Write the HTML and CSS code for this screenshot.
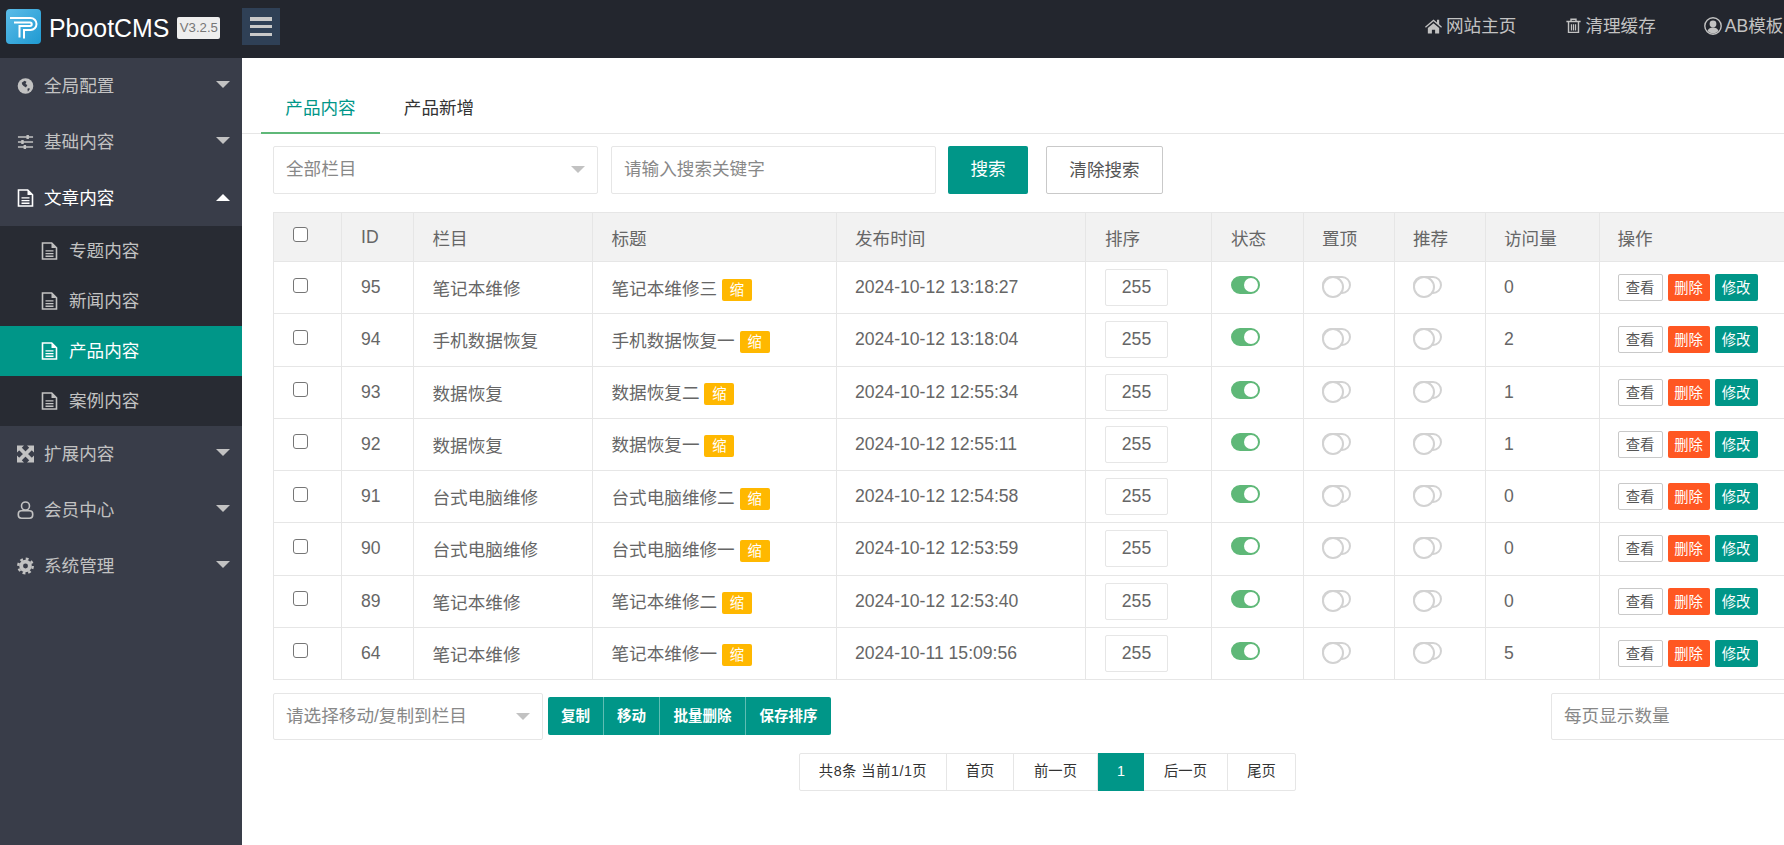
FILE: index.html
```html
<!DOCTYPE html>
<html lang="zh-CN">
<head>
<meta charset="utf-8">
<title>PbootCMS</title>
<link rel="stylesheet" href="styles.css">
</head>
<body>
<svg class="defs" width="0" height="0" aria-hidden="true">
  <symbol id="i-doc" viewBox="0 0 16 18"><path fill="none" stroke="currentColor" stroke-width="1.6" d="M1 1h9.2L15 5.8V17H1z"/><path fill="currentColor" d="M10 1l5 5h-5zM4 8.2h8v1.4H4zM4 10.9h8v1.4H4zM4 13.6h8V15H4z"/></symbol>
</svg>
<div class="app">
  <header class="top">
    <div class="brand">
      <svg class="logo" viewBox="0 0 35 35"><defs><linearGradient id="lg" x1="0" y1="0" x2="1" y2="1"><stop offset="0" stop-color="#5cbce8"/><stop offset="1" stop-color="#1f9ad2"/></linearGradient></defs><rect width="35" height="35" rx="4" fill="url(#lg)"/><path fill="none" stroke="#fff" stroke-width="2" d="M4 9h20.500a5.500 5.500 0 0 1 0 12H18v8.500M8 13.500h16a1.500 1.500 0 0 1 0 3.500H13.500v11.500"/></svg>
      <span class="brand-name">PbootCMS</span>
      <span class="version">V3.2.5</span>
    </div>
    <button class="menu-toggle" aria-label="菜单"><i></i><i></i><i></i></button>
    <nav class="top-nav">
      <a><svg class="ti" viewBox="0 0 18 16"><path fill="currentColor" d="M9 1L0 8.700l.9 1.100L9 3l8.100 6.800.9-1.100-3-2.500V1.500h-2.300v2.800zM3 10v6h4.300v-4h3.400v4H15v-6L9 5z"/></svg>网站主页</a>
      <a class="nav-trash"><svg class="ti" viewBox="0 0 16 18"><path fill="none" stroke="currentColor" stroke-width="1.600" d="M0 4h16M5.200 4V1.500h5.600V4M2.400 4v12.200h11.200V4"/><path fill="currentColor" d="M5 7h1.400v7H5zM7.300 7h1.400v7H7.300zM9.600 7H11v7H9.600z"/></svg>清理缓存</a>
      <a class="nav-user"><svg class="ti ti-user" viewBox="0 0 18 18"><circle cx="9" cy="9" r="8.200" fill="none" stroke="currentColor" stroke-width="1.400"/><circle cx="9" cy="7" r="3.400" fill="currentColor"/><path fill="currentColor" d="M3.500 14c1-3 3-3.500 5.500-3.500S13.500 11 14.500 14a7.500 7.500 0 0 1-11 0z"/></svg>AB模板</a>
    </nav>
  </header>
  <div class="body">
    <aside class="side">
      <a class="nav-item">
        <svg class="ni" viewBox="0 0 18 18"><circle cx="9" cy="9" r="8.300" fill="currentColor"/><path fill="#393d49" d="M5 5.500l3-2 2 1-1 2.300 2 1.200-1.500 2.500L7 9 5.500 7.500zM11 12l2-1 .5 1.500-2 2.500z"/></svg>
        <span>全局配置</span><b class="caret"></b>
      </a>
      <a class="nav-item">
        <svg class="ni" viewBox="0 0 18 16"><path fill="currentColor" d="M1 2h16v1.500H1zM1 7.200h16v1.500H1zM1 12.500h16V14H1zM10 .6h2.600v4.200H10zM4.500 5.900h2.600v4.200H4.500zM7 11.200h2.600v4.200H7z"/></svg>
        <span>基础内容</span><b class="caret"></b>
      </a>
      <a class="nav-item open">
        <svg class="ni"><use href="#i-doc"/></svg>
        <span>文章内容</span><b class="caret up"></b>
      </a>
      <div class="sub">
        <a class="sub-item"><svg class="ni"><use href="#i-doc"/></svg><span>专题内容</span></a>
        <a class="sub-item"><svg class="ni"><use href="#i-doc"/></svg><span>新闻内容</span></a>
        <a class="sub-item active"><svg class="ni"><use href="#i-doc"/></svg><span>产品内容</span></a>
        <a class="sub-item"><svg class="ni"><use href="#i-doc"/></svg><span>案例内容</span></a>
      </div>
      <a class="nav-item">
        <svg class="ni" viewBox="0 0 17 17"><path fill="currentColor" d="M0 0h7L0 7zM17 0v7l-7-7zM0 17v-7l7 7zM17 17h-7l7-7z"/><path fill="none" stroke="currentColor" stroke-width="3.800" d="M2.500 2.500l12 12M14.500 2.500l-12 12"/></svg>
        <span>扩展内容</span><b class="caret"></b>
      </a>
      <a class="nav-item">
        <svg class="ni" viewBox="0 0 16 18"><circle cx="8" cy="5" r="4" fill="none" stroke="currentColor" stroke-width="1.600"/><rect x=".8" y="9.800" width="14.400" height="7.400" rx="3.200" fill="none" stroke="currentColor" stroke-width="1.600"/></svg>
        <span>会员中心</span><b class="caret"></b>
      </a>
      <a class="nav-item">
        <svg class="ni" viewBox="0 0 18 18"><circle cx="9" cy="9" r="4.600" fill="none" stroke="currentColor" stroke-width="4"/><circle cx="9" cy="9" r="7.600" fill="none" stroke="currentColor" stroke-width="2.600" stroke-dasharray="3 2.970"/></svg>
        <span>系统管理</span><b class="caret"></b>
      </a>
    </aside>
    <main class="main">
      <div class="tabs">
        <a class="tab current">产品内容</a>
        <a class="tab second">产品新增</a>
      </div>
      <div class="search">
        <div class="select w-cat"><span>全部栏目</span><b class="arrow"></b></div>
        <div class="input w-key">请输入搜索关键字</div>
        <a class="btn btn-green">搜索</a>
        <a class="btn btn-plain">清除搜索</a>
      </div>
      <table class="grid">
        <colgroup>
          <col class="c1"><col class="c2"><col class="c3"><col class="c4"><col class="c5"><col class="c6"><col class="c7"><col class="c8"><col class="c9"><col class="c10"><col class="c11">
        </colgroup>
        <thead>
          <tr>
            <th><span class="check"></span></th><th>ID</th><th>栏目</th><th>标题</th><th>发布时间</th><th>排序</th><th>状态</th><th>置顶</th><th>推荐</th><th>访问量</th><th>操作</th>
          </tr>
        </thead>
        <tbody>
          <tr><td><span class="check"></span></td><td>95</td><td>笔记本维修</td><td>笔记本维修三 <span class="tag">缩</span></td><td>2024-10-12 13:18:27</td><td><span class="sort">255</span></td><td><span class="sw on"></span></td><td><span class="sw"></span></td><td><span class="sw"></span></td><td>0</td><td class="ops"><a class="op view">查看</a><a class="op del">删除</a><a class="op edit">修改</a></td></tr>
          <tr><td><span class="check"></span></td><td>94</td><td>手机数据恢复</td><td>手机数据恢复一 <span class="tag">缩</span></td><td>2024-10-12 13:18:04</td><td><span class="sort">255</span></td><td><span class="sw on"></span></td><td><span class="sw"></span></td><td><span class="sw"></span></td><td>2</td><td class="ops"><a class="op view">查看</a><a class="op del">删除</a><a class="op edit">修改</a></td></tr>
          <tr><td><span class="check"></span></td><td>93</td><td>数据恢复</td><td>数据恢复二 <span class="tag">缩</span></td><td>2024-10-12 12:55:34</td><td><span class="sort">255</span></td><td><span class="sw on"></span></td><td><span class="sw"></span></td><td><span class="sw"></span></td><td>1</td><td class="ops"><a class="op view">查看</a><a class="op del">删除</a><a class="op edit">修改</a></td></tr>
          <tr><td><span class="check"></span></td><td>92</td><td>数据恢复</td><td>数据恢复一 <span class="tag">缩</span></td><td>2024-10-12 12:55:11</td><td><span class="sort">255</span></td><td><span class="sw on"></span></td><td><span class="sw"></span></td><td><span class="sw"></span></td><td>1</td><td class="ops"><a class="op view">查看</a><a class="op del">删除</a><a class="op edit">修改</a></td></tr>
          <tr><td><span class="check"></span></td><td>91</td><td>台式电脑维修</td><td>台式电脑维修二 <span class="tag">缩</span></td><td>2024-10-12 12:54:58</td><td><span class="sort">255</span></td><td><span class="sw on"></span></td><td><span class="sw"></span></td><td><span class="sw"></span></td><td>0</td><td class="ops"><a class="op view">查看</a><a class="op del">删除</a><a class="op edit">修改</a></td></tr>
          <tr><td><span class="check"></span></td><td>90</td><td>台式电脑维修</td><td>台式电脑维修一 <span class="tag">缩</span></td><td>2024-10-12 12:53:59</td><td><span class="sort">255</span></td><td><span class="sw on"></span></td><td><span class="sw"></span></td><td><span class="sw"></span></td><td>0</td><td class="ops"><a class="op view">查看</a><a class="op del">删除</a><a class="op edit">修改</a></td></tr>
          <tr><td><span class="check"></span></td><td>89</td><td>笔记本维修</td><td>笔记本维修二 <span class="tag">缩</span></td><td>2024-10-12 12:53:40</td><td><span class="sort">255</span></td><td><span class="sw on"></span></td><td><span class="sw"></span></td><td><span class="sw"></span></td><td>0</td><td class="ops"><a class="op view">查看</a><a class="op del">删除</a><a class="op edit">修改</a></td></tr>
          <tr><td><span class="check"></span></td><td>64</td><td>笔记本维修</td><td>笔记本维修一 <span class="tag">缩</span></td><td>2024-10-11 15:09:56</td><td><span class="sort">255</span></td><td><span class="sw on"></span></td><td><span class="sw"></span></td><td><span class="sw"></span></td><td>5</td><td class="ops"><a class="op view">查看</a><a class="op del">删除</a><a class="op edit">修改</a></td></tr>
        </tbody>
      </table>
      <div class="actions">
        <div class="select w-move"><span>请选择移动/复制到栏目</span><b class="arrow"></b></div>
        <div class="group"><a class="g1">复制</a><a class="g2">移动</a><a class="g3">批量删除</a><a class="g4">保存排序</a></div>
        <div class="input w-size">每页显示数量</div>
      </div>
      <div class="pager">
        <a class="p1">共8条 当前1/1页</a><a class="p2">首页</a><a class="p3">前一页</a><a class="p4 cur">1</a><a class="p5">后一页</a><a class="p6">尾页</a>
      </div>
    </main>
  </div>
</div>
</body>
</html>
```

FILE: styles.css
```css
* { box-sizing: border-box; }
html, body { margin: 0; height: 845px; overflow: hidden; background: #fff; }
body { font-family: "Liberation Sans", "Noto Sans CJK SC", sans-serif; font-size: 17.6px; color: #666; }
.defs { position: absolute; }
a { text-decoration: none; }

.app { width: 1840px; height: 845px; display: flex; flex-direction: column; }

.top { height: 58px; flex: none; background: #23262e; display: flex; align-items: flex-start; }
.brand { width: 242px; flex: none; height: 58px; display: flex; align-items: center; padding-left: 6px; }
.logo { width: 35px; height: 35px; flex: none; margin-top: -5px; }
.brand-name { margin-left: 8px; color: #fff; font-size: 24.9px; line-height: 1; margin-top: -2px; }
.version { margin-left: 8px; width: 43px; height: 22px; border-radius: 2px; background: #eee; color: #777; font-size: 13.2px; line-height: 22px; text-align: center; margin-top: -2px; }
.menu-toggle { width: 38px; height: 37px; margin-top: 8px; padding: 9px 8px; border: 0; background: #2f4056; display: flex; flex-direction: column; justify-content: space-between; }
.menu-toggle i { display: block; width: 22px; height: 3.500px; background: #c9c9c9; }
.top-nav { margin-left: auto; padding-right: 50px; display: flex; height: 49px; align-items: center; gap: 49px; width: 415px; }
.top-nav a { display: flex; align-items: center; gap: 4px; color: #c2c2c2; white-space: nowrap; }
.top-nav .nav-trash { gap: 3px; }
.top-nav .nav-user { margin-left: -1px; gap: 3px; }
.ti { width: 17px; height: 16px; flex: none; margin-top: 2px; }
.ti-user { width: 18px; height: 18px; }

.body { flex: 1; display: flex; min-height: 0; }
.side { width: 242px; flex: none; background: #393d49; }
.nav-item { height: 56px; display: flex; align-items: center; padding-left: 16.500px; color: #c2c2c2; position: relative; }
.nav-item.open { color: #fff; }
.ni { width: 17px; height: 18px; flex: none; margin-right: 10.500px; }
.nav-item span, .sub-item span { margin-bottom: 4px; }
.caret { position: absolute; right: 12px; top: 50%; margin-top: -5px; border: 7px solid transparent; border-top-color: #c2c2c2; border-bottom: 0; }
.caret.up { border-top: 0; border-bottom: 7px solid #fff; margin-top: -4px; }
.sub { background: #282b33; }
.sub-item { height: 50px; display: flex; align-items: center; padding-left: 41px; color: #c2c2c2; }
.sub-item .ni { margin-right: 11px; }
.sub-item.active { background: #009688; color: #fff; }

.main { flex: 1; min-width: 0; padding-top: 23px; }
.tabs { margin-left: 19px; height: 53px; display: flex; position: relative; }
.tabs::after { content: ""; position: absolute; left: -19px; right: 0; bottom: 0; height: 1px; background: #e6e6e6; }
.tab { line-height: 55px; color: #333; height: 53px; position: relative; z-index: 1; width: 119px; text-align: center; }
.tab.second { width: 118px; }
.tab.current { color: #009688; border-bottom: 2px solid #5fb878; }

.search { margin: 12px 0 0 31px; height: 48px; display: flex; }
.select, .input { height: 48px; border: 1px solid #e6e6e6; border-radius: 2px; background: #fff; color: #888; line-height: 44px; padding-left: 12px; flex: none; }
.select { position: relative; }
.arrow { position: absolute; right: 12px; top: 50%; margin-top: -4px; border: 7px solid transparent; border-top-color: #c2c2c2; border-bottom: 0; }
.w-cat { width: 325px; }
.w-key { width: 325px; margin-left: 13px; }
.btn { height: 48px; line-height: 46px; text-align: center; border-radius: 2px; flex: none; }
.btn-green { width: 80px; margin-left: 12px; background: #009688; color: #fff; }
.btn-plain { width: 117px; margin-left: 18px; border: 1px solid #c9c9c9; color: #555; }

.grid { margin: 18px 0 0 31px; width: 1548px; table-layout: fixed; border-collapse: collapse; }
.c1 { width: 68px; } .c2 { width: 71.500px; } .c3 { width: 179px; } .c4 { width: 244.500px; } .c5 { width: 249px; }
.c6 { width: 126px; } .c7 { width: 92px; } .c8 { width: 91px; } .c9 { width: 91px; } .c10 { width: 113.500px; } .c11 { width: 223px; }
.grid th, .grid td { border: 1px solid #e6e6e6; padding: 0 0 0 19px; text-align: left; font-weight: 400; color: #666; white-space: nowrap; }
.grid tr > :nth-child(5), .grid tr > :nth-child(8), .grid tr > :nth-child(9), .grid tr > :nth-child(10), .grid tr > :nth-child(11) { padding-left: 18px; }
.grid thead tr { height: 49px; background: #f2f2f2; }
.grid tbody tr { height: 52.250px; }
.check { display: block; width: 15px; height: 15px; margin: -5px 0 0 0; border: 1.500px solid #767676; border-radius: 3px; background: #fff; }
.tag { display: inline-block; width: 30px; height: 22px; border-radius: 2px; background: #ffb800; color: #fff; font-size: 14.300px; line-height: 22px; text-align: center; }
.sort { display: block; width: 63px; height: 37px; border: 1px solid #e6e6e6; border-radius: 2px; background: #fff; line-height: 35px; text-align: center; }
.sw { display: block; position: relative; width: 29px; height: 18px; margin: -5px 0 0 0; border: 2px solid #d2d2d2; border-radius: 20px; background: #fff; }
.sw::before { content: ""; position: absolute; left: -2px; top: -2px; width: 18px; height: 18px; border: 2px solid #d2d2d2; border-radius: 50%; background: #fff; }
.sw.on { border-color: #5fb878; background: #5fb878; }
.sw.on::before { left: 11px; top: 0; width: 14px; height: 14px; border: 0; }
.grid .ops { font-size: 0; }
.op { display: inline-block; height: 27px; font-size: 14.300px; line-height: 29px; text-align: center; border-radius: 2px; margin-right: 5px; vertical-align: top; overflow: hidden; }
.view { width: 45px; border: 1px solid #c9c9c9; line-height: 27px; color: #555; background: #fff; }
.del { width: 42px; background: #ff5722; color: #fff; }
.edit { width: 43px; background: #009688; color: #fff; }

.actions { margin: 13px 0 0 31px; display: flex; height: 47px; align-items: center; width: 1567px; }
.actions .select, .actions .input { height: 47px; }
.w-move { width: 270px; }
.group { height: 38px; margin: -1px 0 0 5px; display: flex; background: #009688; border-radius: 2px; font-size: 14.500px; color: #fff; flex: none; width: 283px; }
.group a { line-height: 38px; text-align: center; border-right: 1px solid #5fbdb3; font-weight: 700; }
.g1 { width: 56px; } .g2 { width: 56px; } .g3 { width: 86px; } .g4 { width: 85px; border-right: 0 !important; }
.w-size { width: 289px; margin-left: auto; }

.pager { margin: 13px 0 0 557px; width: 497px; height: 38px; display: flex; border: 1px solid #e6e6e6; border-radius: 2px; font-size: 14.300px; color: #333; }
.pager a { line-height: 35px; text-align: center; border-right: 1px solid #e6e6e6; color: #333; flex: none; }
.p1 { width: 147px; letter-spacing: .5px; } .p2 { width: 67px; } .p3 { width: 84px; }
.pager .cur { width: 46px; height: 38px; margin-top: -1px; line-height: 37px; background: #009688; color: #fff; border-right: 0; }
.p5 { width: 84px; } .p6 { width: 67px; border-right: 0 !important; }
```
